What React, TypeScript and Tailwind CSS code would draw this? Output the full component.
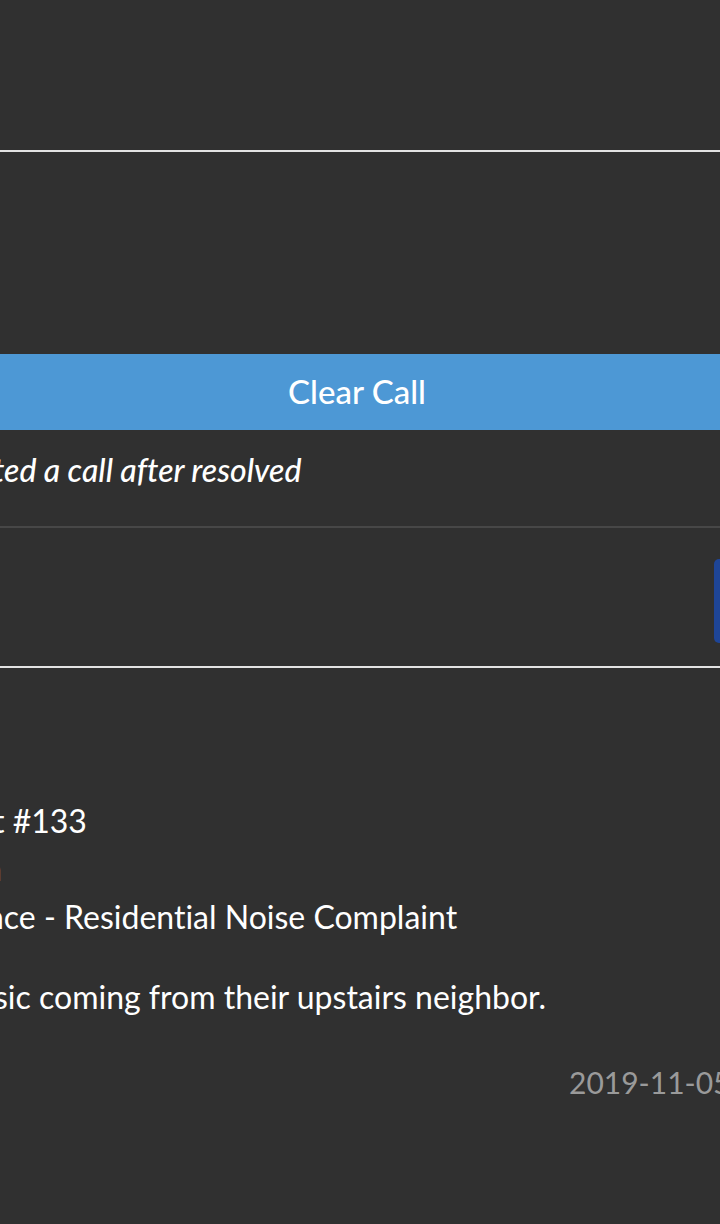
import React from 'react';

const App: React.FC = () => {
  return (
    <div className="w-[720px] h-[1224px] overflow-hidden bg-[#303030] text-white font-['Lato','Liberation_Sans',sans-serif] [font-variant-ligatures:none]">
      <div className="h-[150px]" />
      <div className="h-[2px] bg-[#e2e2e2]" />
      <div className="h-[202px]" />

      <button className="w-full h-[76px] bg-[#4d98d5] text-white text-[33px] font-medium flex items-center justify-center pr-[6px]">
        Clear Call
      </button>

      <div className="h-[96px] flex items-center">
        <p className="italic font-medium text-[32px] whitespace-nowrap -ml-[7px] pb-[16px]">ted a call after resolved</p>
      </div>
      <div className="h-[2px] bg-[#474747]" />

      <div className="h-[138px] flex items-start justify-end pt-[31px]">
        <div className="w-[6px] h-[84px] bg-[#1e4597] rounded-l-[5px]" />
      </div>
      <div className="h-[2px] bg-[#e2e2e2]" />

      <div className="pt-[129px] flex flex-col text-[32px] leading-[48px] whitespace-nowrap">
        <p className="-ml-[7px]">t #133</p>
        <p className="-ml-[16px]">n</p>
        <p className="-ml-[14px]">nce - Residential Noise Complaint</p>
        <p className="mt-[32px] -ml-[6px]">sic coming from their upstairs neighbor.</p>
        <p className="mt-[37px] pl-[569px] text-[#9a9a9a] text-[30px]">2019-11-05</p>
      </div>
    </div>
  );
};

export default App;
